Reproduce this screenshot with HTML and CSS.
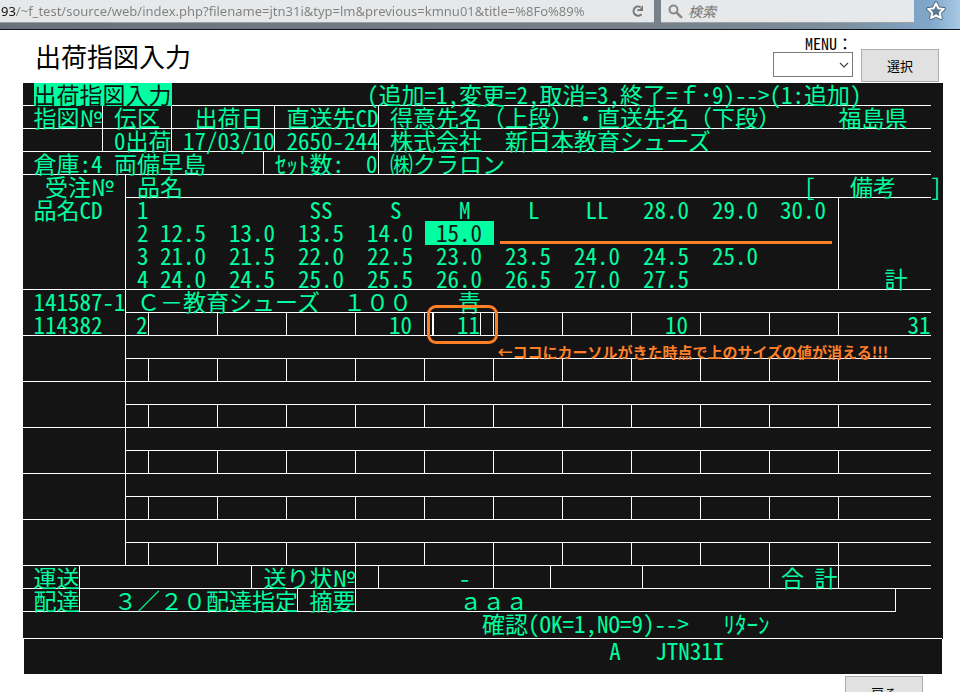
FILE: index.html
```html
<!DOCTYPE html>
<html lang="ja">
<head>
<meta charset="utf-8">
<title>出荷指図入力</title>
<link rel="stylesheet" href="styles.css">
</head>
<body>
<header class="browser">
  <div class="address">
    <input class="url" type="text" aria-label="URL" value="93/~f_test/source/web/index.php?filename=jtn31i&amp;typ=lm&amp;previous=kmnu01&amp;title=%8Fo%89%">
    <button class="icon-btn" type="button" aria-label="再読み込み">
      <svg width="14" height="14" viewBox="0 0 14 14"><path d="M10.5 10.2A4.6 4.6 0 1 1 9.6 3.2" fill="none" stroke="#777" stroke-width="2"/><path d="M12 1v6H6.4V5.2h2.4z" fill="#777"/></svg>
    </button>
  </div>
  <div class="search">
    <svg width="15" height="15" viewBox="0 0 15 15"><circle cx="5.5" cy="5.5" r="4" fill="none" stroke="#888" stroke-width="2"/><path d="M8.6 8.6l4.6 4.6" stroke="#888" stroke-width="2.6" stroke-linecap="round"/></svg>
    <input type="search" aria-label="検索" placeholder="検索">
  </div>
  <button class="icon-btn star" type="button" aria-label="ブックマーク">
    <svg width="20" height="20" viewBox="0 0 20 20"><path d="M10 2.2l2.4 5 5.5.7-4 3.8 1 5.5L10 14.5l-4.9 2.7 1-5.5-4-3.8 5.5-.7z" fill="none" stroke="#41566a" stroke-width="3.6" stroke-linejoin="round"/><path d="M10 2.2l2.4 5 5.5.7-4 3.8 1 5.5L10 14.5l-4.9 2.7 1-5.5-4-3.8 5.5-.7z" fill="#5c7a94" stroke="#fff" stroke-width="2" stroke-linejoin="round"/></svg>
  </button>
</header>

<main>
  <div class="top">
    <h1>出荷指図入力</h1>
    <form class="menu">
      <div class="menu-field">
        <label for="menu">MENU<span class="full">：</span></label>
        <div class="select"><select id="menu"><option></option></select>
          <svg width="10" height="6" viewBox="0 0 10 6"><path d="M1 1l4 4 4-4" fill="none" stroke="#444" stroke-width="1.2"/></svg></div>
      </div>
      <button class="btn" type="button">選択</button>
    </form>
  </div>

  <section class="screen">
    <div class="line">
      <div class="s30 p1"><mark>出荷指図入力</mark></div>
      <div class="s49">(追加=1,変更=2,取消=3,終了=<span class="full">ｆ</span>･9)--&gt;(1:追加)</div>
    </div>
    <div class="line">
      <div class="s7 p1 r">指図<span class="full">№</span></div>
      <div class="s6 p1 r">伝区</div>
      <div class="s9 p2 r">出荷日</div>
      <div class="s9 p1 r">直送先CD</div>
      <div class="s40 p1 full">得意先名（上段）・直送先名（下段）</div>
      <div class="s8">福島県</div>
    </div>
    <div class="line">
      <div class="s7 r"></div>
      <div class="s6 p1 r">0出荷</div>
      <div class="s9 p1 r">17/03/10</div>
      <div class="s9 p1 r">2650-244</div>
      <div class="s48 p1 full">株式会社　新日本教育シューズ</div>
    </div>
    <div class="line">
      <div class="s7 p1">倉庫:4</div>
      <div class="s14 p1 r">両備早島</div>
      <div class="s10 p1 r split"><span>ｾｯﾄ数:</span><span>0</span></div>
      <div class="s48 p1">㈱クラロン</div>
    </div>

    <table>
      <colgroup><col class="c-code"><col class="c-no"><col><col><col><col><col><col><col><col><col><col><col class="c-sum"></colgroup>
      <tbody>
        <tr><th class="code" rowspan="5"><div class="p1">受注<span class="full">№</span></div><div>品名CD</div></th>
          <th class="b" colspan="12"><div class="item-head"><span>品名</span><span class="remark"><span>[</span><span>備考</span><span>]</span></span></div></th></tr>
        <tr class="sizes"><th>1</th><td></td><td></td><td class="letter">SS</td><td class="letter">S</td><td class="letter">M</td><td class="letter">L</td><td class="letter">LL</td><td>28.0</td><td>29.0</td><td class="r">30.0</td><td class="sum b" rowspan="4">計</td></tr>
        <tr class="sizes"><th>2</th><td>12.5</td><td>13.0</td><td>13.5</td><td>14.0</td><td class="on">15.0</td><td class="strike"><i></i></td><td></td><td></td><td></td><td class="r"></td></tr>
        <tr class="sizes"><th>3</th><td>21.0</td><td>21.5</td><td>22.0</td><td>22.5</td><td>23.0</td><td>23.5</td><td>24.0</td><td>24.5</td><td>25.0</td><td class="r"></td></tr>
        <tr class="sizes last"><th>4</th><td>24.0</td><td>24.5</td><td>25.0</td><td>25.5</td><td>26.0</td><td>26.5</td><td>27.0</td><td>27.5</td><td></td><td class="r"></td></tr>
      </tbody>
      <tbody>
        <tr><td class="code" rowspan="2"><div>141587-1</div><div>114382</div></td>
          <td class="b" colspan="12"><div class="item full"><span>Ｃ－教育シューズ　１００</span><span>青</span></div></td></tr>
        <tr class="qty"><td>2</td><td></td><td></td><td></td><td>10</td><td class="focus"><input type="text" aria-label="15.0 数量" value="11"><i class="ring"></i><span class="note">←ココにカーソルがきた時点で上のサイズの値が消える!!!</span></td><td></td><td></td><td>10</td><td></td><td></td><td class="total">31</td></tr>
      </tbody>
      <tbody>
        <tr><td class="code" rowspan="2"></td><td class="b" colspan="12"></td></tr>
        <tr class="qty"><td></td><td></td><td></td><td></td><td></td><td></td><td></td><td></td><td></td><td></td><td></td><td></td></tr>
      </tbody>
      <tbody>
        <tr><td class="code" rowspan="2"></td><td class="b" colspan="12"></td></tr>
        <tr class="qty"><td></td><td></td><td></td><td></td><td></td><td></td><td></td><td></td><td></td><td></td><td></td><td></td></tr>
      </tbody>
      <tbody>
        <tr><td class="code" rowspan="2"></td><td class="b" colspan="12"></td></tr>
        <tr class="qty"><td></td><td></td><td></td><td></td><td></td><td></td><td></td><td></td><td></td><td></td><td></td><td></td></tr>
      </tbody>
      <tbody>
        <tr><td class="code" rowspan="2"></td><td class="b" colspan="12"></td></tr>
        <tr class="qty"><td></td><td></td><td></td><td></td><td></td><td></td><td></td><td></td><td></td><td></td><td></td><td></td></tr>
      </tbody>
      <tbody>
        <tr><td class="code" rowspan="2"></td><td class="b" colspan="12"></td></tr>
        <tr class="qty"><td></td><td></td><td></td><td></td><td></td><td></td><td></td><td></td><td></td><td></td><td></td><td></td></tr>
      </tbody>
    </table>

    <div class="line">
      <div class="s5 p1 r">運送</div>
      <div class="s15 r"></div>
      <div class="s9 p1 r">送り状<span class="full">№</span></div>
      <div class="s2 r"></div>
      <div class="s10 p7 r">-</div>
      <div class="s5 r"></div>
      <div class="s8 r"></div>
      <div class="s11 r"></div>
      <div class="s6 p1 r split"><span>合</span><span>計</span></div>
      <div class="s8"></div>
    </div>
    <div class="line">
      <div class="s5 p1 r">配達</div>
      <div class="s19 p3 r full">３／２０配達指定</div>
      <div class="s5 p1 r">摘要</div>
      <div class="s47 p9 r full">ａａａ</div>
    </div>
    <div class="line confirm">
      <div class="s40"></div>
      <div class="s21">確認(OK=1,NO=9)--&gt;</div>
      <div class="s10">ﾘﾀｰﾝ</div>
    </div>
  </section>
  <footer class="status">
    <div class="line">
      <div class="s51"></div>
      <div class="s4">A</div>
      <div class="s10">JTN31I</div>
    </div>
  </footer>
  <div class="actions"><button class="btn" type="button">戻る</button></div>
</main>
</body>
</html>
```
FILE: styles.css
```css
* { box-sizing: border-box; }

html, body { height: 100%; }

body {
  margin: 0;
  overflow: hidden;
  background: #fff;
  color: #000;
  font-family: "Noto Sans CJK JP", sans-serif;
}

button, input, select { font: inherit; margin: 0; }

/* Browser bar */
.browser {
  display: flex;
  gap: 7px;
  height: 30px;
  padding-bottom: 6px;
  border-bottom: 1px solid #10141a;
  background: linear-gradient(90deg, #68727b 0, #76818a 68%, #7e8f9e 88%, #7fa8cc 97%, #a9c9e4 100%);
}

.address, .search {
  display: flex;
  align-items: center;
  background: #e6e8ea;
  border-bottom: 1px solid #9aa1a7;
  color: #808080;
}

.address { width: 654px; padding-right: 9px; }

.url {
  flex: 1;
  min-width: 0;
  margin-right: 34px;
  padding: 0 0 0 1px;
  border: 0;
  background: linear-gradient(90deg, #111 16px, #808080 16px);
  background-clip: text;
  -webkit-background-clip: text;
  color: transparent;
  font-family: "Noto Sans", sans-serif;
  font-size: 13px;
  line-height: 22px;
}

.icon-btn {
  display: flex;
  padding: 0;
  border: 0;
  background: none;
}

.search { flex: 1; gap: 5px; padding-left: 7px; }

.search input {
  flex: 1;
  min-width: 0;
  padding: 0;
  border: 0;
  background: none;
  font-size: 14px;
  font-style: italic;
  line-height: 20px;
}

.search input::placeholder { color: #777; }

.star {
  width: 39px;
  padding: 1px 0 0 5px;
}

/* Page heading and menu */
.top {
  display: flex;
  justify-content: space-between;
  height: 53px;
  padding: 0 21px 0 35px;
}

h1 {
  margin: 7px 0 0;
  font-size: 26px;
  font-weight: 400;
  line-height: 38px;
}

.menu { display: flex; gap: 8px; }

.menu-field {
  display: flex;
  flex-direction: column;
  width: 80px;
  padding-top: 4px;
}

.menu-field label {
  align-self: flex-end;
  font-size: 16px;
  font-feature-settings: "hwid";
  line-height: 18px;
}

.select { position: relative; }

.select svg { position: absolute; right: 4px; top: 10px; }

select {
  display: block;
  width: 100%;
  height: 25px;
  border: 1px solid #7a7a7a;
  background: #fff;
  appearance: none;
}

.btn {
  width: 78px;
  height: 33px;
  padding: 0;
  border: 1px solid #adadad;
  background: #e1e1e1;
  color: #000;
  font-size: 13px;
}

.menu .btn { margin-top: 19px; }

/* Terminal screen: 80 half-width columns */
.screen, .status {
  background: #141414;
  color: #00ffa0;
  font-size: 23px;
  font-feature-settings: "hwid";
  line-height: 22px;
  text-spacing-trim: space-all;
  white-space: nowrap;
}

.screen { margin: 0 17px 0 23px; }

.full { font-feature-settings: "fwid"; }

.line {
  display: grid;
  grid-template-columns: repeat(80, minmax(0, 1fr));
  height: 23px;
}

.screen .line, table { margin: 0 1px 0 -1px; }

.line > div { border-bottom: 1px solid #fff; }

.line > .r, .r { border-right: 1px solid #fff; }

.split { display: flex; justify-content: space-between; }

.s2 { grid-column: span 2; }
.s4 { grid-column: span 4; }
.s5 { grid-column: span 5; }
.s6 { grid-column: span 6; }
.s7 { grid-column: span 7; }
.s8 { grid-column: span 8; }
.s9 { grid-column: span 9; }
.s10 { grid-column: span 10; }
.s11 { grid-column: span 11; }
.s14 { grid-column: span 14; }
.s15 { grid-column: span 15; }
.s19 { grid-column: span 19; }
.s21 { grid-column: span 21; }
.s30 { grid-column: span 30; }
.s40 { grid-column: span 40; }
.s47 { grid-column: span 47; }
.s48 { grid-column: span 48; }
.s49 { grid-column: span 49; }
.s51 { grid-column: span 51; }

.p1 { padding-left: 0.5em; }
.p2 { padding-left: 1em; }
.p3 { padding-left: 1.5em; }
.p7 { padding-left: 3.5em; }
.p9 { padding-left: 4.5em; }

mark {
  display: inline-block;
  background: #00ffa0;
  box-shadow: 0 1px 0 #00ffa0;
  color: #141414;
}

/* Order table */
table {
  width: 98.75%;
  border-collapse: separate;
  border-spacing: 0;
  table-layout: fixed;
}

.c-code { width: 11.4%; }
.c-no { width: 2.53%; }
.c-sum { width: 10.12%; }

tr { height: 23px; }

th, td {
  height: 23px;
  padding: 0;
  font-weight: 400;
  text-align: right;
  vertical-align: top;
}

.code {
  padding-left: 0.5em;
  border-right: 1px solid #fff;
  border-bottom: 1px solid #fff;
  text-align: left;
}

.code div:first-child { height: 23px; }

.b, .last > *, .qty td { border-bottom: 1px solid #fff; }

.item-head, .item {
  display: flex;
  padding-left: 0.5em;
}

.remark {
  display: flex;
  gap: 1.5em;
  margin: 0 -0.5em 0 auto;
}

.item { gap: 2em; }

.sizes td { padding-right: 0.5em; }

.sizes .letter { padding-right: 1em; }

.sizes .on {
  background: #00ffa0;
  box-shadow: 0 1px 0 #00ffa0;
  color: #141414;
}

.sizes .sum {
  padding-right: 1em;
  vertical-align: bottom;
}

.qty td {
  padding-right: 0.5em;
  border-right: 1px solid #fff;
}

.qty td:first-child { padding-right: 0; }

.qty td:last-child { padding-right: 0; border-right: 0; }

/* Marked-up notes lying over the table */
.strike, .qty .focus { position: relative; }

.strike i {
  position: absolute;
  top: 20px;
  left: 6px;
  width: 482%;
  height: 3px;
  background: #ff7f27;
}

.focus input {
  display: block;
  width: 49px;
  height: 24px;
  margin: -1px 0 -1px auto;
  padding: 0;
  border: 1px solid #fff;
  border-left-width: 2px;
  border-radius: 0;
  background: none;
  color: inherit;
  font-feature-settings: inherit;
  text-align: right;
  outline: 0;
}

.ring {
  position: absolute;
  inset: -8px -5px -9px 2px;
  border: 3px solid #ff7f27;
  border-radius: 9px;
}

.note {
  position: absolute;
  top: 28px;
  left: 73px;
  color: #ff7f27;
  font-size: 15px;
  font-weight: 700;
  font-feature-settings: normal;
}

/* Confirmation and status lines */
.line.confirm {
  height: 27px;
  border-bottom: 1px solid #fff;
}

.line.confirm > div, .status .line > div { border: 0; }

.status {
  height: 35px;
  margin: 0 18px 0 24px;
}

.actions {
  display: flex;
  justify-content: flex-end;
  padding: 2px 37px 0 0;
}
```
